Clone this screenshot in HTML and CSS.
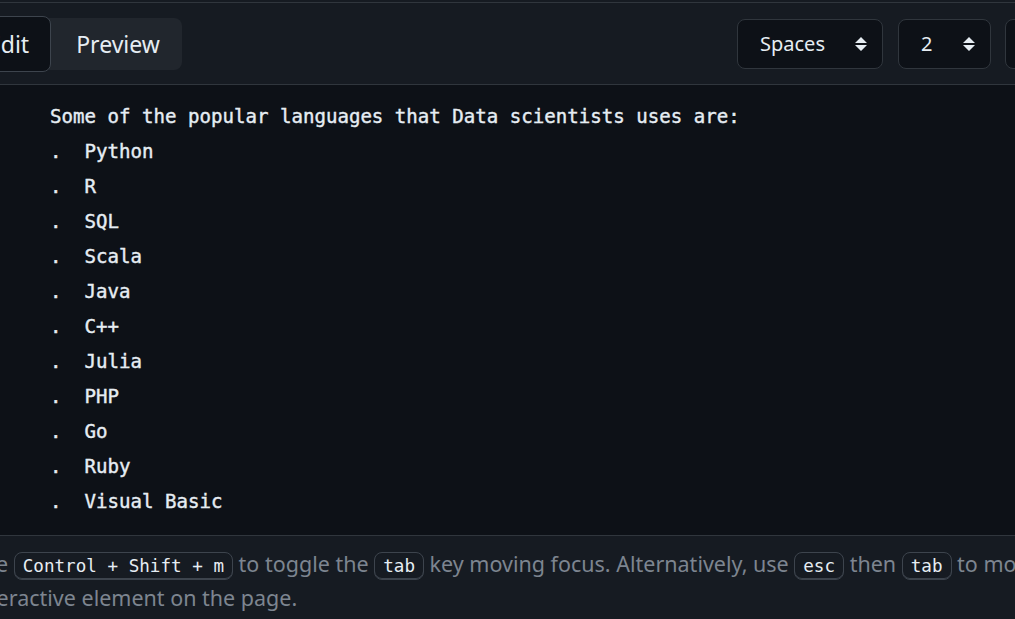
FILE: index.html
```html
<!DOCTYPE html>
<html>
<head>
<meta charset="utf-8">
<link rel="stylesheet" href="styles.css">
</head>
<body>
<div class="page">
  <div class="topstrip"></div>
  <header class="header">
    <nav class="tabs">
      <button class="tab tab-active">Edit</button>
      <button class="tab">Preview</button>
    </nav>
    <div class="controls">
      <div class="select select-wide"><span>Spaces</span><svg class="updown" width="14" height="16" viewBox="0 0 14 16"><path d="M7 1 L13 7 L1 7 Z M1 9 L13 9 L7 15 Z" fill="#e6edf3"/></svg></div>
      <div class="select select-narrow"><span>2</span><svg class="updown" width="14" height="16" viewBox="0 0 14 16"><path d="M7 1 L13 7 L1 7 Z M1 9 L13 9 L7 15 Z" fill="#e6edf3"/></svg></div>
      <div class="select select-cut"></div>
    </div>
  </header>
  <main class="editor">
<pre class="code">Some of the popular languages that Data scientists uses are:
.  Python
.  R
.  SQL
.  Scala
.  Java
.  C++
.  Julia
.  PHP
.  Go
.  Ruby
.  Visual Basic</pre>
  </main>
  <footer class="footer">
    <p class="hint">Use <kbd>Control + Shift + m</kbd> to toggle the <kbd>tab</kbd> key moving focus. Alternatively, use <kbd>esc</kbd> then <kbd>tab</kbd> to move to the next interactive element on the page.</p>
  </footer>
</div>
</body>
</html>
```
FILE: styles.css
```css
html, body {
  margin: 0;
  padding: 0;
  background: #161b22;
  overflow: hidden;
  height: 619px;
}
.page {
  width: 1015px;
  height: 619px;
  display: flex;
  flex-direction: column;
  background: #161b22;
}
.topstrip {
  height: 2px;
  background: #161b22;
}
.header {
  height: 81px;
  border-top: 1px solid #30363d;
  border-bottom: 1px solid #30363d;
  background: #161b22;
  display: flex;
  align-items: center;
  justify-content: space-between;
}
.tabs {
  display: flex;
  align-items: center;
  margin-left: -34px;
  background: #21262d;
  border-radius: 8px;
  height: 52px;
}
.tab {
  font-family: "Noto Sans", sans-serif;
  font-size: 23px;
  color: #e6edf3;
  background: transparent;
  border: 1px solid transparent;
  height: 52px;
  padding: 0 21px 0 24px;
  margin: 0;
  border-radius: 8px;
}
.tab-active {
  background: #0d1117;
  border: 1px solid #3d444d;
  height: 56px;
  padding: 0 21px;
}
.controls {
  display: flex;
  align-items: center;
  margin-right: -40px;
}
.select {
  height: 50px;
  box-sizing: border-box;
  border: 1px solid #30363d;
  border-radius: 8px;
  background: #0d1117;
  display: flex;
  align-items: center;
  justify-content: space-between;
  padding: 0 14px 0 22px;
  font-family: "Noto Sans", sans-serif;
  font-size: 20px;
  color: #e6edf3;
}
.select-wide { width: 146px; margin-right: 15px; }
.select-narrow { width: 93px; margin-right: 14px; }
.select-cut { width: 50px; }
.editor {
  flex: 1;
  background: #0d1117;
  padding: 14px 0 0 50px;
}
.code {
  margin: 0;
  font-family: "DejaVu Sans Mono", monospace;
  font-size: 19.1px;
  line-height: 35px;
  color: #e6edf3;
  -webkit-text-stroke: 0.4px #e6edf3;
}
.footer {
  height: 83px;
  border-top: 1px solid #30363d;
  background: #161b22;
  overflow: hidden;
}
.hint {
  margin: 12px 0 0 -30px;
  width: 1190px;
  font-family: "Noto Sans", sans-serif;
  font-size: 21.5px;
  line-height: 32px;
  color: #7d8590;
}
kbd {
  font-family: "DejaVu Sans Mono", monospace;
  font-size: 17.6px;
  color: #e6edf3;
  background: #161b22;
  border: 1px solid #3d444d;
  box-shadow: inset 0 -1px 0 #3d444d;
  border-radius: 8px;
  padding: 3px 8px;
}
```
